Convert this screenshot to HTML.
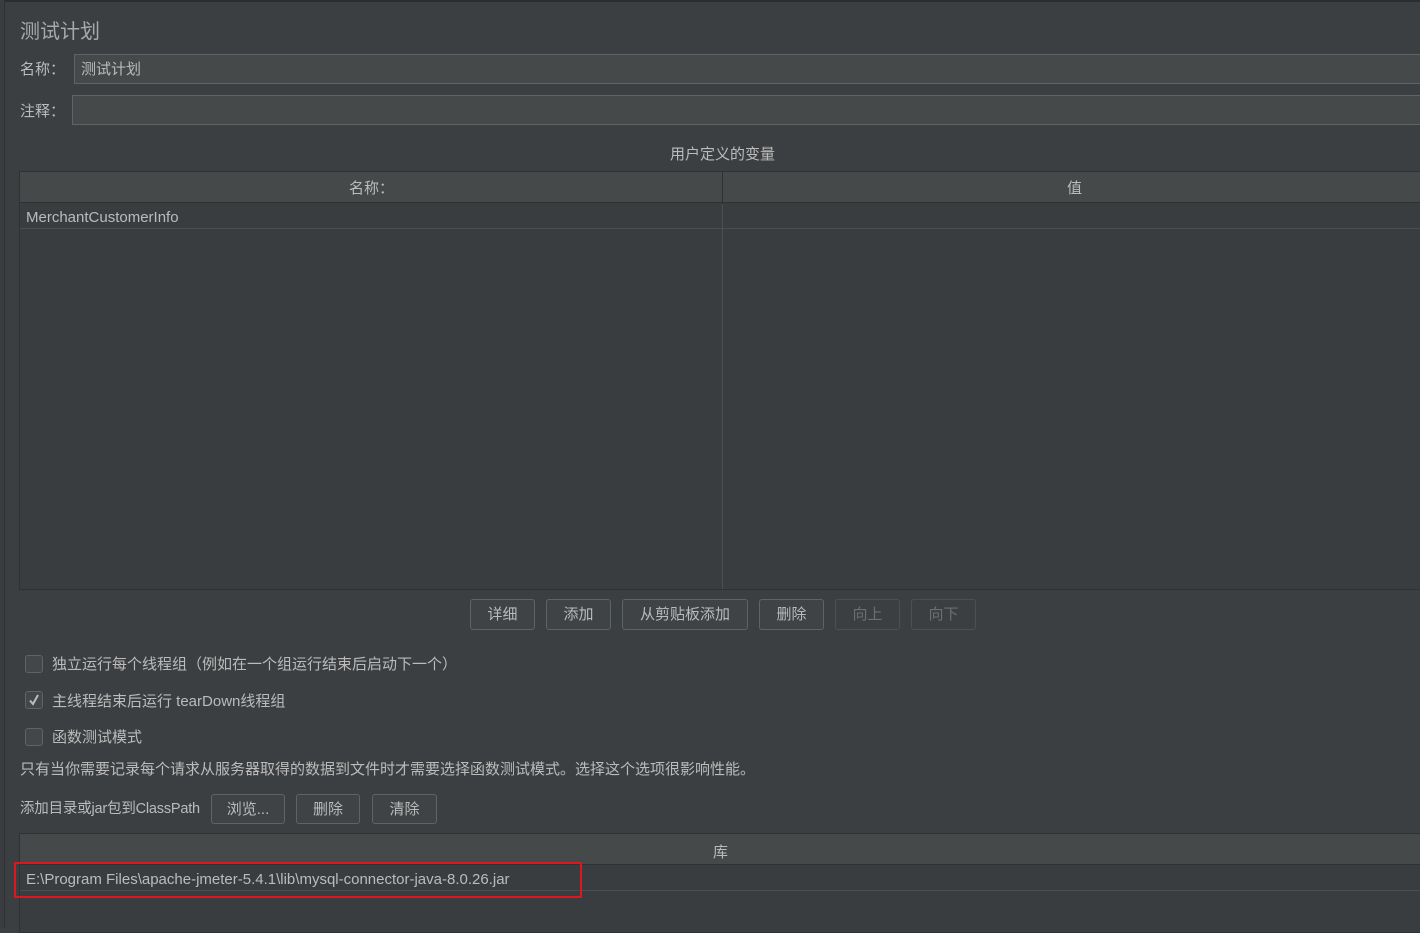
<!DOCTYPE html>
<html><head><meta charset="utf-8"><style>
*{box-sizing:border-box;margin:0;padding:0}
body{width:1420px;height:928px;background:#3c3f41;position:relative;overflow:hidden;font-family:"Liberation Sans","Noto Sans CJK SC",sans-serif;color:#bbbbbb;font-size:15px}
.a{position:absolute}
.t{position:absolute;white-space:nowrap;line-height:1}
.fld{position:absolute;background:#45494a;border:1px solid #5e6366}
.btn{position:absolute;border:1px solid #5e6366;background:#3f4346;border-radius:3px;text-align:center;line-height:29px;color:#bbbbbb;font-size:15px}
.dis{color:#6e6e6e;border-color:#4c5052;background:#3c3f41}
.cb{position:absolute;width:18px;height:18px;border:1px solid #5e6366;border-radius:3px;background:#43474a}
</style></head><body>
<div class="a" style="left:0;top:0;width:1420px;height:2px;background:#2b2d2f"></div>
<div class="a" style="left:0;top:0;width:5px;height:928px;background:#3a3d3f;border-right:1px solid #2f3133"></div>
<div class="t" style="left:20px;top:22px;font-size:20px;color:#a9a9a9">测试计划</div>
<div class="t" style="left:20px;top:62px">名称：</div>
<div class="fld" style="left:74px;top:54px;width:1350px;height:30px"></div>
<div class="t" style="left:81px;top:62px">测试计划</div>
<div class="t" style="left:20px;top:104px">注释：</div>
<div class="fld" style="left:72px;top:95px;width:1352px;height:30px"></div>
<div class="t" style="left:670px;top:147px">用户定义的变量</div>
<div class="a" style="left:19px;top:171px;width:1405px;height:419px;background:#3a3d40;border:1px solid #2f3133"></div>
<div class="a" style="left:20px;top:172px;width:1400px;height:31px;background:#45494a;border-bottom:1px solid #2f3133"></div>
<div class="a" style="left:722px;top:172px;width:1px;height:417px;background:#2f3133"></div>
<div class="a" style="left:722px;top:204px;width:1px;height:385px;background:#4b4f52"></div>
<div class="a" style="left:20px;top:228px;width:1400px;height:1px;background:#4b4f52"></div>
<div class="t" style="left:349px;top:181px">名称：</div>
<div class="t" style="left:1067px;top:181px">值</div>
<div class="t" style="left:26px;top:210px">MerchantCustomerInfo</div>
<div class="btn" style="left:470px;top:599px;width:65px;height:31px">详细</div>
<div class="btn" style="left:546px;top:599px;width:65px;height:31px">添加</div>
<div class="btn" style="left:622px;top:599px;width:126px;height:31px">从剪贴板添加</div>
<div class="btn" style="left:759px;top:599px;width:65px;height:31px">删除</div>
<div class="btn dis" style="left:835px;top:599px;width:65px;height:31px">向上</div>
<div class="btn dis" style="left:911px;top:599px;width:65px;height:31px">向下</div>
<div class="cb" style="left:25px;top:655px"></div>
<div class="t" style="left:52px;top:657px">独立运行每个线程组（例如在一个组运行结束后启动下一个）</div>
<div class="cb" style="left:25px;top:691px"></div>
<svg class="a" style="left:25px;top:691px" width="18" height="18"><path d="M5 9.5 L8 13 L13 4" stroke="#bbbbbb" stroke-width="2" fill="none"/></svg>
<div class="t" style="left:52px;top:694px">主线程结束后运行 tearDown线程组</div>
<div class="cb" style="left:25px;top:728px"></div>
<div class="t" style="left:52px;top:730px">函数测试模式</div>
<div class="t" style="left:20px;top:762px">只有当你需要记录每个请求从服务器取得的数据到文件时才需要选择函数测试模式。选择这个选项很影响性能。</div>
<div class="t" style="left:20px;top:802px;font-size:14.5px;letter-spacing:-0.2px">添加目录或jar包到ClassPath</div>
<div class="btn" style="left:211px;top:794px;width:74px;height:30px">浏览...</div>
<div class="btn" style="left:296px;top:794px;width:64px;height:30px">删除</div>
<div class="btn" style="left:372px;top:794px;width:65px;height:30px">清除</div>
<div class="a" style="left:19px;top:833px;width:1405px;height:100px;background:#3a3d40;border:1px solid #2f3133"></div>
<div class="a" style="left:20px;top:834px;width:1400px;height:31px;background:#45494a;border-bottom:1px solid #2f3133"></div>
<div class="t" style="left:713px;top:845px">库</div>
<div class="a" style="left:20px;top:890px;width:1400px;height:1px;background:#4b4f52"></div>
<div class="t" style="left:26px;top:872px">E:\Program Files\apache-jmeter-5.4.1\lib\mysql-connector-java-8.0.26.jar</div>
<div class="a" style="left:14px;top:862px;width:568px;height:36px;border:2px solid #e0161f"></div>
</body></html>
